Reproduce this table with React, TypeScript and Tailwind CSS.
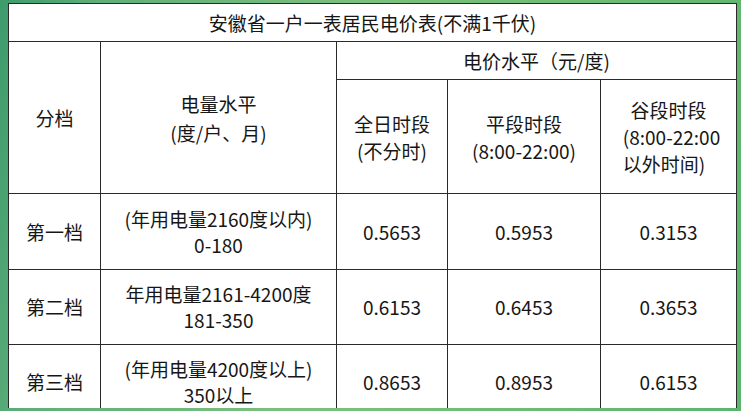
const rows = [
  { tier: "第一档", usage: ["(年用电量2160度以内)", "0-180"], prices: ["0.5653", "0.5953", "0.3153"], h: "h-[76px]" },
  { tier: "第二档", usage: ["年用电量2161-4200度", "181-350"], prices: ["0.6153", "0.6453", "0.3653"], h: "h-[75px]" },
  { tier: "第三档", usage: ["(年用电量4200度以上)", "350以上"], prices: ["0.8653", "0.8953", "0.6153"], h: "h-[75px]" },
];

const cell = "border border-[#2a2a2a] text-center align-middle p-0";

export default function App() {
  return (
    <div
      className="h-[411px] w-[741px] overflow-hidden bg-[linear-gradient(100deg,#3e9b6c_0%,#5fae7a_12%,#7cc07e_45%,#6cbb74_75%,#5cb56f_100%)] pl-[8px] pt-[3px]"
      style={{ fontFamily: '"Noto Sans CJK SC", "Noto Sans", sans-serif' }}
    >
      {/* table runs past the bottom edge in the screenshot */}
      <div className="h-[405px] w-[729px] overflow-hidden">
        <table className="w-[728px] table-fixed border-collapse border-[1.5px] border-[#222] bg-white text-[19px] leading-[26px] text-[#161616]">
          <colgroup>
            <col className="w-[92px]" />
            <col className="w-[236px]" />
            <col className="w-[111px]" />
            <col className="w-[153px]" />
            <col className="w-[136px]" />
          </colgroup>
          <tbody>
            <tr className="h-[38px]">
              <td colSpan={5} className={cell}>
                安徽省一户一表居民电价表(不满1千伏)
              </td>
            </tr>
            <tr className="h-[38px]">
              <td rowSpan={2} className={cell}>
                分档
              </td>
              <td rowSpan={2} className={`${cell} leading-[29px]`}>
                <div>电量水平</div>
                <div>(度/户、月)</div>
              </td>
              <td colSpan={3} className={cell}>
                电价水平（元/度)
              </td>
            </tr>
            <tr className="h-[114px] leading-[27px]">
              <td className={cell}>
                <div>全日时段</div>
                <div>(不分时)</div>
              </td>
              <td className={cell}>
                <div>平段时段</div>
                <div>(8:00-22:00)</div>
              </td>
              <td className={cell}>
                <div>谷段时段</div>
                <div className="flex justify-center">
                  <div className="pl-[6px] text-left">
                    <div>(8:00-22:00</div>
                    <div>以外时间)</div>
                  </div>
                </div>
              </td>
            </tr>
            {rows.map((r) => (
              <tr key={r.tier} className={r.h}>
                <td className={cell}>{r.tier}</td>
                <td className={cell}>
                  <div>{r.usage[0]}</div>
                  <div>{r.usage[1]}</div>
                </td>
                {r.prices.map((p, i) => (
                  <td key={i} className={cell}>
                    {p}
                  </td>
                ))}
              </tr>
            ))}
          </tbody>
        </table>
      </div>
    </div>
  );
}
